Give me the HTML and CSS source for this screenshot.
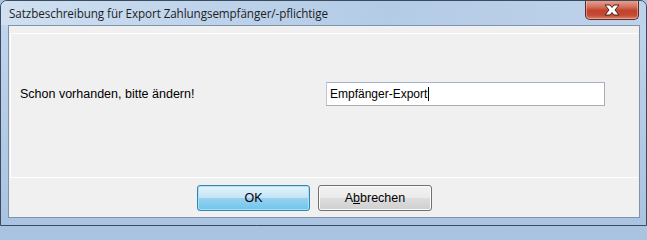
FILE: index.html
```html
<!DOCTYPE html>
<html>
<head>
<meta charset="utf-8">
<link rel="stylesheet" href="styles.css">
</head>
<body>
<div class="window">
  <div class="titlebar">
    <span class="title">Satzbeschreibung für Export Zahlungsempfänger/-pflichtige</span>
    <div class="close">
      <svg width="20" height="12" viewBox="0 0 20 12">
        <path d="M3 1 H8 L10 3.5 L12 1 H17 L13 6 L17 11 H12 L10 8.5 L8 11 H3 L7 6 Z" fill="#ffffff" stroke="#4a2018" stroke-width="1" stroke-linejoin="round"/>
      </svg>
    </div>
  </div>
  <div class="client">
    <div class="panel">
      <div class="row">
        <span class="label">Schon vorhanden, bitte ändern!</span>
        <div class="input"><span class="value">Empfänger-Export</span><span class="caret"></span></div>
      </div>
    </div>
    <div class="footer">
      <button class="btn btn-default">OK</button>
      <button class="btn">A<u>b</u>brechen</button>
    </div>
  </div>
</div>
</body>
</html>
```
FILE: styles.css
```css
html, body {
  margin: 0;
  padding: 0;
  background: #aac3e1;
}
.window {
  width: 647px;
  height: 226px;
  box-sizing: border-box;
  border: 1px solid #3b4a5c;
  border-radius: 7px 7px 0 0;
  background: linear-gradient(180deg, #c4d8ee 0%, #b8cee8 40%, #aac3e1 100%);
  display: flex;
  flex-direction: column;
  overflow: hidden;
}
.titlebar {
  height: 24px;
  flex: none;
  display: flex;
  align-items: flex-start;
  justify-content: space-between;
  background: linear-gradient(100deg, #d0e0f1 0%, #bcd2ea 35%, #b4cbe6 60%, #bed3ea 100%);
}
.title {
  font-family: "Open Sans", "Noto Sans", sans-serif;
  font-size: 11.7px;
  color: #1e1e1e;
  padding-left: 8px;
  padding-top: 5px;
  line-height: 15px;
  letter-spacing: -0.1px;
}
.close {
  width: 54px;
  height: 20px;
  margin-top: -1px;
  margin-right: 7px;
  box-sizing: border-box;
  border: 1px solid #5b2b25;
  border-top: none;
  border-radius: 0 0 5px 5px;
  background: linear-gradient(180deg, #e8a595 0%, #d6735f 35%, #c0432c 55%, #c54a33 80%, #d9806c 100%);
  box-shadow: inset 0 0 0 1px rgba(255,220,210,0.45);
  display: flex;
  align-items: center;
  justify-content: center;
}
.close svg {
  display: block;
}
.client {
  flex: 1;
  margin: 0 6px 7px 7px;
  border: 1px solid #7f93ab;
  background: #f0f0f0;
  display: flex;
  flex-direction: column;
}
.panel {
  flex: none;
  margin: 7px 1px 0 1px;
  height: 145px;
  border-top: 1px solid #ffffff;
  border-left: 1px solid #ffffff;
  border-bottom: 1px solid #ffffff;
  box-sizing: border-box;
  padding-top: 48px;
}
.row {
  display: flex;
  align-items: center;
  height: 24px;
}
.label {
  font-family: "Liberation Sans", Arial, sans-serif;
  font-size: 12.5px;
  color: #000;
  margin-left: 9px;
  width: 306px;
}
.input {
  width: 279px;
  height: 24px;
  box-sizing: border-box;
  border: 1px solid #abadb3;
  border-top-color: #a6b3c5;
  border-left-color: #c2c8d3;
  background: #ffffff;
  display: flex;
  align-items: center;
  padding-left: 3px;
  font-family: "Liberation Sans", Arial, sans-serif;
  font-size: 12px;
  color: #000;
}
.caret {
  width: 1px;
  height: 14px;
  background: #000;
  margin-left: 1px;
}
.footer {
  flex: 1;
  display: flex;
  align-items: flex-start;
  padding-top: 7px;
  padding-left: 188px;
  gap: 8px;
}
.btn {
  width: 114px;
  height: 26px;
  box-sizing: border-box;
  border: 1px solid #707070;
  border-radius: 3px;
  background: linear-gradient(180deg, #f2f2f2 0%, #ebebeb 48%, #dddddd 52%, #cfcfcf 100%);
  box-shadow: inset 0 0 0 1px #fcfcfc;
  font-family: "Liberation Sans", Arial, sans-serif;
  font-size: 12.5px;
  color: #000;
  padding: 0;
  margin: 0;
}
.btn-default {
  width: 113px;
  border-color: #3c7fb1;
  background: linear-gradient(180deg, #e5f4fc 0%, #c4e5f6 48%, #98d1ef 52%, #6dc5ec 100%);
  box-shadow: inset 0 0 0 1px #a7e3f8;
}
```
